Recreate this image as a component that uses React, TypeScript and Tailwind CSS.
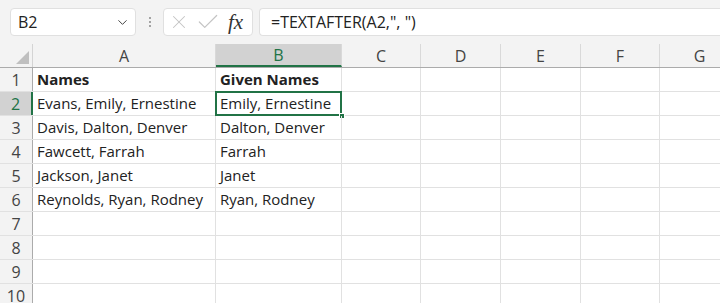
import React from "react";
import { ChevronDown, X, Check } from "lucide-react";

const cols = ["A", "B", "C", "D", "E", "F", "G"];
const widths = ["w-[183px]", "w-[126px]", "w-[79px]", "w-[80px]", "w-[80px]", "w-[79px]", "w-[80px]"];

const data: string[][] = [
  ["Names", "Given Names"],
  ["Evans, Emily, Ernestine", "Emily, Ernestine"],
  ["Davis, Dalton, Denver", "Dalton, Denver"],
  ["Fawcett, Farrah", "Farrah"],
  ["Jackson, Janet", "Janet"],
  ["Reynolds, Ryan, Rodney", "Ryan, Rodney"],
  [],
  [],
  [],
  [],
];

const App: React.FC = () => {
  return (
    <div
      className="w-[720px] h-[303px] overflow-hidden bg-white text-[#222]"
      style={{ fontFamily: "'Open Sans', sans-serif" }}
    >
      {/* Formula bar */}
      <div className="h-[44px] bg-[#f3f3f3] flex items-center pl-[10px]">
        <div className="w-[126px] h-[28px] bg-white rounded-[4px] border border-[#e0e0e0] flex items-center justify-between pl-[7px] pr-[5px] text-[16px]">
          <span>B2</span>
          <ChevronDown className="w-[15px] h-[15px] text-[#444]" strokeWidth={1.6} />
        </div>
        <div className="w-[27px] flex flex-col items-center gap-[2px]">
          <span className="w-[2px] h-[2px] bg-[#888] rounded-full" />
          <span className="w-[2px] h-[2px] bg-[#888] rounded-full" />
          <span className="w-[2px] h-[2px] bg-[#888] rounded-full" />
        </div>
        <div className="w-[90px] h-[28px] bg-white rounded-[4px] border border-[#e0e0e0] flex items-center pl-[4px] gap-[5px]">
          <X className="w-[22px] h-[22px] text-[#c4c4c4]" strokeWidth={1.1} />
          <Check className="w-[26px] h-[26px] text-[#c4c4c4]" strokeWidth={1.1} />
          <span
            className="text-[21px] italic text-[#333] leading-none ml-[2px]"
            style={{ fontFamily: "'Liberation Serif', serif" }}
          >
            fx
          </span>
        </div>
        <div className="ml-[6px] flex-1 h-[28px] bg-white rounded-l-[4px] border border-r-0 border-[#e0e0e0] flex items-center pl-[11px] text-[16px]">
          =TEXTAFTER(A2,", ")
        </div>
      </div>

      {/* Grid */}
      <div className="flex flex-col">
        <div className="flex h-[24px] bg-[#f3f3f3] border-b border-[#ababab] text-[16px] text-[#444]">
          <div className="w-[33px] shrink-0 border-r border-[#d4d4d4] flex items-end justify-end p-[3px]">
            <div className="w-0 h-0 border-l-[13px] border-l-transparent border-b-[13px] border-b-[#bfbfbf]" />
          </div>
          {cols.map((c, i) => (
            <div
              key={c}
              className={`${widths[i]} shrink-0 flex items-center justify-center border-r border-[#d9d9d9] ${
                c === "B" ? "bg-[#d2d2d2] text-[#217346] border-b-2 border-b-[#217346]" : ""
              }`}
            >
              {c}
            </div>
          ))}
        </div>
        {data.map((row, r) => (
          <div key={r} className="flex h-[24px] border-b border-[#e1e1e1] text-[15px]">
            <div
              className={`w-[33px] shrink-0 flex items-center justify-center border-r border-[#ababab] text-[16px] ${
                r === 1 ? "bg-[#d2d2d2] text-[#217346] border-r-2 border-r-[#217346]" : "bg-[#f3f3f3] text-[#444]"
              }`}
            >
              {r + 1}
            </div>
            {cols.map((c, i) => (
              <div
                key={c}
                className={`${widths[i]} shrink-0 relative flex items-center px-[4px] whitespace-nowrap border-r border-[#e1e1e1] ${
                  r === 0 ? "font-bold" : ""
                }`}
              >
                {row[i] ?? ""}
                {r === 1 && c === "B" && (
                  <>
                    <div className="absolute left-[-1px] top-[-1px] right-[-1px] bottom-[-1px] border-2 border-[#217346]" />
                    <div className="absolute right-[-4px] bottom-[-4px] w-[6px] h-[6px] bg-[#217346] border border-white" />
                  </>
                )}
              </div>
            ))}
          </div>
        ))}
      </div>
    </div>
  );
};

export default App;
